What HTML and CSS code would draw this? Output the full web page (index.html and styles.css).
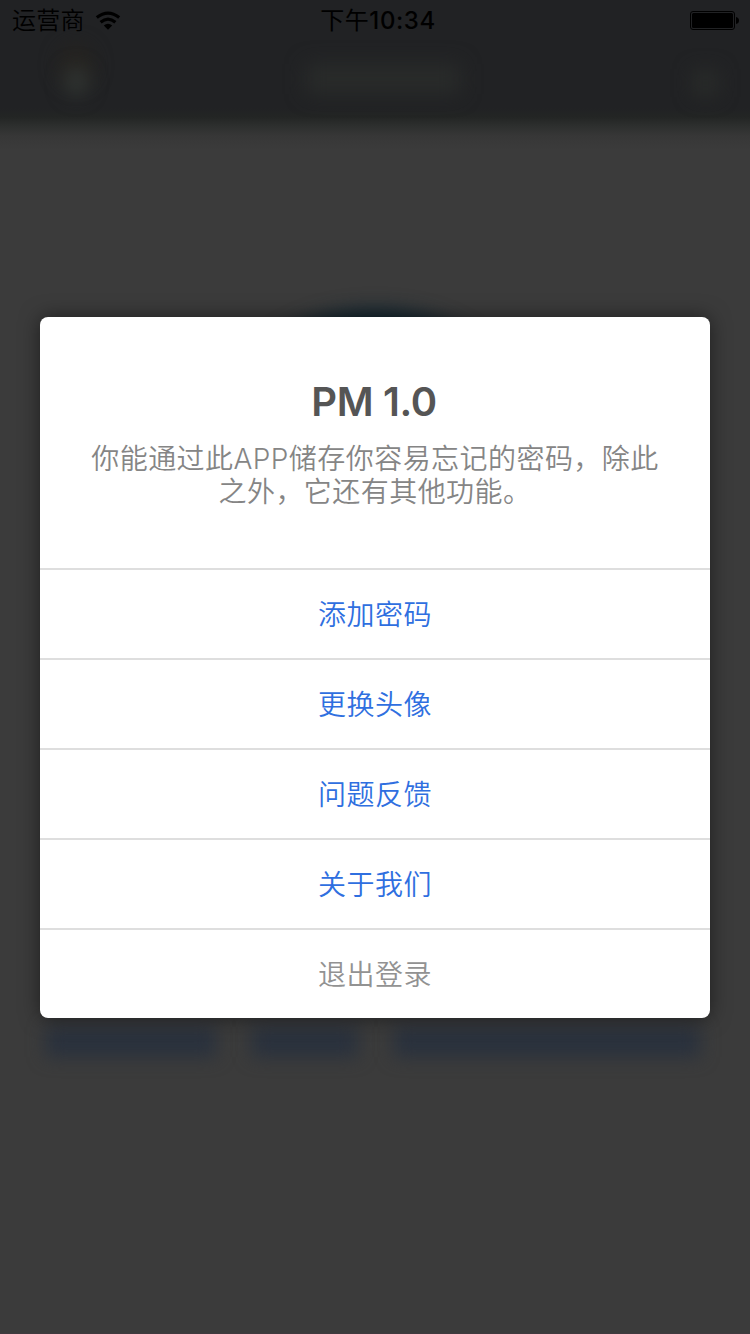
FILE: index.html
```html
<!DOCTYPE html>
<html lang="zh-CN">
<head>
<meta charset="utf-8">
<title>PM 1.0</title>
<link rel="stylesheet" href="styles.css">
</head>
<body>
<div class="screen">
  <div class="backdrop" aria-hidden="true">
    <div class="nav-bar"></div>
    <div class="blob avatar-top"></div>
    <div class="blob avatar-bottom"></div>
    <div class="blob nav-title"></div>
    <div class="blob nav-action"></div>
    <div class="blob hero"></div>
    <div class="blob caption caption-a"></div>
    <div class="blob caption caption-b"></div>
    <div class="blob caption caption-c"></div>
    <div class="bottom-line"></div>
  </div>
  <header class="status">
    <div class="carrier">
      <span>运营商</span>
      <svg class="wifi" width="26" height="20" viewBox="0 0 26 20">
        <path d="M1.8 6.6 Q13 -2.4 24.2 6.6" fill="none" stroke="#000" stroke-width="3.2"/>
        <path d="M5.6 11.3 Q13 5.1 20.4 11.3" fill="none" stroke="#000" stroke-width="3.2"/>
        <path d="M8.8 14.6 Q13 11 17.2 14.6 L13 18.8 Z" fill="#000"/>
      </svg>
    </div>
    <div class="clock"><span class="period">下午</span>10:34</div>
    <svg class="battery" width="50" height="20" viewBox="0 0 50 20">
      <rect x="0.5" y="0.5" width="44" height="18" rx="2.5" fill="none" stroke="#000"/>
      <rect x="2" y="2" width="41" height="15" rx="1.5" fill="#000"/>
      <path d="M46 6 Q49 6.5 49 9.5 Q49 12.5 46 13 Z" fill="#000"/>
    </svg>
  </header>
  <main class="dialog">
    <section class="intro">
      <h1 class="title">PM 1.0</h1>
      <p class="message">你能通过此APP储存你容易忘记的密码，除此<br>之外，它还有其他功能。</p>
    </section>
    <button class="action">添加密码</button>
    <button class="action">更换头像</button>
    <button class="action">问题反馈</button>
    <button class="action">关于我们</button>
    <button class="action cancel">退出登录</button>
  </main>
</div>
</body>
</html>
```
FILE: styles.css
```css
* { box-sizing: border-box; }
body { margin: 0; font-family: Inter, "Noto Sans CJK SC", sans-serif; }
.screen {
  position: relative;
  width: 750px;
  height: 1334px;
  overflow: hidden;
  background: #3b3b3b;
  display: flex;
  flex-direction: column;
  align-items: center;
}
.backdrop { position: absolute; inset: 0; }
.nav-bar {
  height: 150px;
  background: linear-gradient(#212224 0, #212224 108px, #232524 117px, #2d2f2e 126px, #373737 136px, #3b3b3b 150px);
}
.blob { position: absolute; }
.avatar-top { left: 58px; top: 44px; width: 36px; height: 42px; border-radius: 50%; background: #252320; filter: blur(9px); }
.avatar-bottom { left: 64px; top: 66px; width: 25px; height: 31px; border-radius: 50%; background: #2f3331; filter: blur(9px); }
.nav-title { left: 306px; top: 64px; width: 154px; height: 30px; background: #292b2a; filter: blur(10px); }
.nav-action { left: 692px; top: 69px; width: 27px; height: 28px; background: #282a29; filter: blur(9px); }
.hero { left: 240px; top: 310px; width: 270px; height: 180px; border-radius: 50%; background: #0e2430; filter: blur(10px); }
.caption { top: 1027px; height: 30px; background: #29313d; filter: blur(9px); }
.caption-a { left: 46px; width: 170px; }
.caption-b { left: 252px; width: 106px; }
.caption-c { left: 394px; width: 306px; }
.bottom-line { position: absolute; left: 0; right: 0; bottom: 0; height: 1px; background: #40393e; }
.status {
  position: relative;
  width: 100%;
  height: 42px;
  padding: 0 11px 0 12px;
  display: grid;
  grid-template-columns: 1fr auto 1fr;
  align-items: center;
  font-size: 24px;
  line-height: 42px;
  color: #000;
}
.carrier { display: flex; align-items: center; gap: 10px; font-weight: 350; letter-spacing: 0.3px; }
.wifi { display: block; margin-top: -1px; }
.clock { font-weight: 500; letter-spacing: 0.6px; padding-left: 5px; }
.period { font-weight: 400; }
.battery { justify-self: end; margin-right: -1px; }
.dialog {
  position: relative;
  width: 670px;
  height: 701px;
  margin-top: 275px;
  background: #fff;
  border-radius: 8px;
  box-shadow: 0 0 20px rgba(0, 0, 0, 0.5);
  overflow: hidden;
}
.intro { height: 251px; padding-top: 61px; text-align: center; }
.title { margin: 0; padding-right: 2px; font-size: 40px; line-height: 48px; font-weight: 570; letter-spacing: -0.4px; color: #555; }
.message { margin: 17px 0 0; font-size: 28px; line-height: 33px; font-weight: 350; letter-spacing: 0.45px; color: #858585; }
.action {
  display: block;
  width: 100%;
  height: 90px;
  padding: 2px 0 0;
  border: 0;
  border-top: 2px solid #dedede;
  background: none;
  font: 350 28px/86px Inter, "Noto Sans CJK SC", sans-serif;
  letter-spacing: 0.5px;
  color: #2f6fe0;
}
.cancel { color: #929292; }
```
